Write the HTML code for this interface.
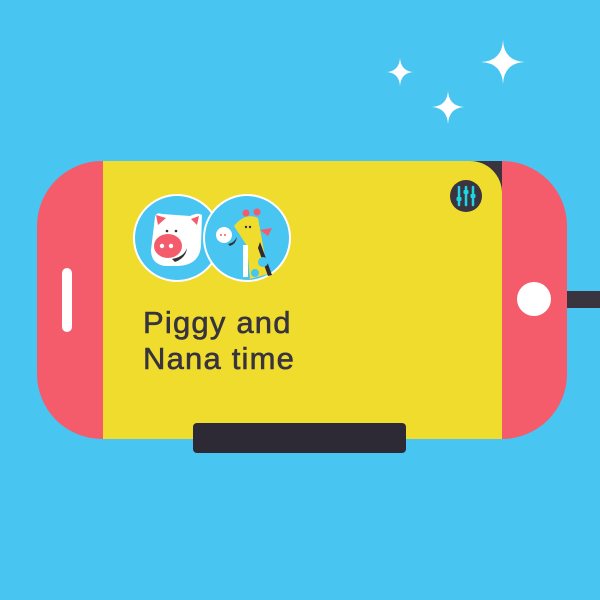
<!DOCTYPE html><html><head><style>
body{margin:0;width:600px;height:600px;background:#48c5f1;position:relative;overflow:hidden;font-family:"Liberation Sans",sans-serif}
div{position:absolute;box-sizing:border-box}
.t{left:143px;font-size:31px;color:#37333f;line-height:1;white-space:nowrap;-webkit-text-stroke:0.6px #37333f;letter-spacing:1.2px}
</style></head><body>
<svg style="position:absolute;left:0;top:0" width="600" height="600">
<g fill="#fff">
<path d="M400 58 Q401 71 413 72 Q401 73 400 86 Q399 73 387 72 Q399 71 400 58Z"/>
<path d="M503 40 Q504 61 525 62 Q504 63 503 84 Q502 63 481 62 Q502 61 503 40Z"/>
<path d="M448 91 Q449 106 464 107 Q449 108 448 124 Q447 108 432 107 Q447 106 448 91Z"/>
</g>
<rect x="560" y="291" width="40" height="17" fill="#3a3440"/>
<path d="M102 161 H502 A65 65 0 0 1 567 226 V374 A65 65 0 0 1 502 439 H102 A65 65 0 0 1 37 374 V226 A65 65 0 0 1 102 161Z" fill="#f45c6c"/>
<rect x="103" y="161" width="399" height="278" fill="#f0dc2c"/>
<path d="M470 161 H502 V193 A32 32 0 0 0 470 161Z" fill="#3a3440"/>
<rect x="62" y="268" width="10" height="64" rx="5" fill="#fff"/>
<circle cx="534" cy="299" r="17" fill="#fff"/>
<rect x="193" y="423" width="213" height="30" rx="4" fill="#2d2a36"/>
<circle cx="466" cy="196" r="16" fill="#3a3440"/>
<g stroke="#1fd6e0" stroke-width="2.5" stroke-linecap="round"><path d="M459 187V205M466 187V205M473 187V205"/></g>
<g fill="#1fd6e0"><rect x="456.5" y="197" width="5" height="4" rx="1"/><rect x="463.5" y="190" width="5" height="4" rx="1"/><rect x="470.5" y="194" width="5" height="4" rx="1"/></g>
<circle cx="177" cy="238" r="43" fill="#48c5f1" stroke="#fff" stroke-width="2"/>
<path d="M155 217 Q156 212 162 214 L190 216 Q198 212 202 215 L201 245 Q200 265 178 266 L165 266 Q151 264 151 250 Z" fill="#fff"/>
<path d="M156 215 L158 225 L166 218Z M199 216 L197 225 L191 219Z" fill="#f45c6c"/>
<ellipse cx="168" cy="246" rx="14" ry="12" fill="#f45c6c"/>
<circle cx="162" cy="246" r="2.2" fill="#fff"/><circle cx="171" cy="246" r="2.2" fill="#fff"/>
<circle cx="167" cy="231" r="1.3" fill="#333"/><circle cx="176" cy="231" r="1.3" fill="#333"/>
<path d="M172 259 Q184 257 187 248 Q186 258 175 262Z" fill="#333"/>
<circle cx="247" cy="238" r="43" fill="#48c5f1" stroke="#fff" stroke-width="2"/>
<path d="M234 226 Q245 212 258 218 L262 240 L268 274 L250 279 L247 246 Z" fill="#f0dc2c"/>
<path d="M260 242 L272 275 L268 276 L258 248Z" fill="#2d2a36"/>
<circle cx="246" cy="213" r="3.5" fill="#f45c6c"/><circle cx="257" cy="212" r="3.5" fill="#f45c6c"/>
<path d="M260 230 L272 228 L268 236Z" fill="#f45c6c"/>
<circle cx="263" cy="262" r="5" fill="#48c5f1"/><circle cx="255" cy="273" r="4" fill="#48c5f1"/>
<rect x="243" y="245" width="5" height="32" fill="#fff"/>
<circle cx="224" cy="235" r="8" fill="#fff"/>
<circle cx="221" cy="235" r="1" fill="#f45c6c"/><circle cx="225" cy="235" r="1" fill="#f45c6c"/>
<circle cx="246" cy="227" r="1.2" fill="#333"/><circle cx="250" cy="227" r="1.2" fill="#333"/>
<path d="M228 244 Q234 243 237 237 Q236 244 230 246Z" fill="#333"/>
</svg>
<div class="t" style="top:307px">Piggy and</div>
<div class="t" style="top:343px">Nana time</div>
</body></html>
